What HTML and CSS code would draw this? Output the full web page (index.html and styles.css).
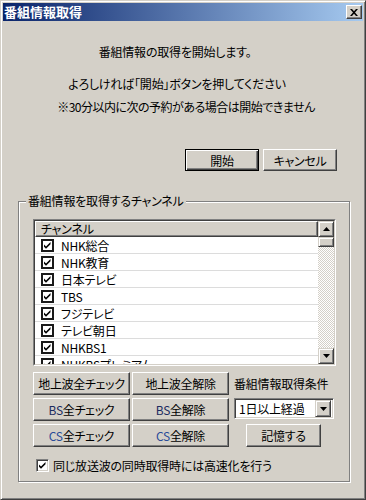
FILE: index.html
```html
<!DOCTYPE html>
<html lang="ja">
<head>
    <meta charset="UTF-8">
    <title>番組情報取得</title>
    <link rel="stylesheet" href="styles.css">
</head>
<body>
    <div class="window">
        <div class="titlebar">
            <span class="title">番組情報取得</span>
            <button class="close-btn">
                <svg width="8" height="7" viewBox="0 0 8 7"><path d="M0 0h2l2 2.2L6 0h2L5 3.5 8 7H6L4 4.8 2 7H0l3-3.5z" fill="#000"/></svg>
            </button>
        </div>

        <div class="message">
            <div class="msg-line msg-1">番組情報の取得を開始します。</div>
            <div class="msg-line msg-2">よろしければ「開始」ボタンを押してください</div>
            <div class="msg-line msg-3">※30分以内に次の予約がある場合は開始できません</div>
        </div>

        <div class="actions">
            <button class="btn btn-default">開始</button>
            <button class="btn">キャンセル</button>
        </div>

        <div class="group">
            <span class="legend">番組情報を取得するチャンネル</span>

            <div class="list">
                <div class="list-inner">
                    <div class="list-main">
                        <div class="list-header">チャンネル</div>
                        <div class="row"><span class="lv-check"></span><span class="row-text">NHK総合</span></div>
                        <div class="row"><span class="lv-check"></span><span class="row-text">NHK教育</span></div>
                        <div class="row"><span class="lv-check"></span><span class="row-text">日本テレビ</span></div>
                        <div class="row"><span class="lv-check"></span><span class="row-text">TBS</span></div>
                        <div class="row"><span class="lv-check"></span><span class="row-text">フジテレビ</span></div>
                        <div class="row"><span class="lv-check"></span><span class="row-text">テレビ朝日</span></div>
                        <div class="row"><span class="lv-check"></span><span class="row-text">NHKBS1</span></div>
                        <div class="row"><span class="lv-check"></span><span class="row-text">NHKBSプレミアム</span></div>
                    </div>
                    <div class="vscroll">
                        <div class="sb-btn">
                            <svg width="7" height="4" viewBox="0 0 7 4"><path d="M3.5 0L7 4H0z" fill="#000"/></svg>
                        </div>
                        <div class="sb-thumb"></div>
                        <div class="sb-track"></div>
                        <div class="sb-btn">
                            <svg width="7" height="4" viewBox="0 0 7 4"><path d="M0 0h7L3.5 4z" fill="#000"/></svg>
                        </div>
                    </div>
                </div>
            </div>

            <div class="controls">
                <button class="btn">地上波全チェック</button>
                <button class="btn">地上波全解除</button>
                <span class="cond-label">番組情報取得条件</span>

                <button class="btn"><span class="bs">BS</span>全チェック</button>
                <button class="btn"><span class="bs">BS</span>全解除</button>
                <div class="combo">
                    <span class="combo-text">1日以上経過</span>
                    <span class="combo-btn">
                        <svg width="7" height="4" viewBox="0 0 7 4"><path d="M0 0h7L3.5 4z" fill="#000"/></svg>
                    </span>
                </div>

                <button class="btn"><span class="cs">CS</span>全チェック</button>
                <button class="btn"><span class="cs">CS</span>全解除</button>
                <button class="btn btn-save">記憶する</button>
            </div>

            <label class="option">
                <span class="checkbox">
                    <svg width="9" height="9" viewBox="0 0 9 9"><path d="M1 3.5l2 2 4.5-4.5v2.2L3 7.7 1 5.7z" fill="#000"/></svg>
                </span>
                <span>同じ放送波の同時取得時には高速化を行う</span>
            </label>
        </div>
    </div>
</body>
</html>
```

FILE: styles.css
```css
* {
    box-sizing: border-box;
}

body {
    margin: 0;
    background: #d4d0c8;
    font-family: "Noto Sans CJK JP", sans-serif;
    font-size: 12px;
    font-feature-settings: "palt";
    letter-spacing: -0.2px;
    color: #000;
}

.window {
    width: 366px;
    height: 500px;
    background: #d4d0c8;
    border: 1px solid;
    border-color: #d4d0c8 #404040 #404040 #d4d0c8;
    box-shadow: inset 1px 1px 0 #fff, inset -1px -1px 0 #808080;
    padding: 2px;
}

.titlebar {
    height: 18px;
    display: flex;
    align-items: center;
    justify-content: space-between;
    padding: 0 1px 0 1px;
    background: linear-gradient(to right, #0a246a, #a6caf0);
}

.title {
    color: #fff;
    font-weight: bold;
    font-size: 13px;
    letter-spacing: 0;
    line-height: 18px;
}

.close-btn {
    width: 16px;
    height: 14px;
    padding: 0;
    display: flex;
    align-items: center;
    justify-content: center;
    background: #d4d0c8;
    border: 1px solid;
    border-color: #fff #404040 #404040 #fff;
    box-shadow: inset -1px -1px 0 #808080;
}

/* message text */
.message {
    margin-top: 24px;
}

.msg-line {
    line-height: 14px;
    text-align: center;
}

.msg-1 {
    padding-right: 16px;
}

.msg-2 {
    margin-top: 18px;
    padding-right: 12px;
}

.msg-3 {
    margin-top: 9px;
    padding-left: 6px;
    letter-spacing: -0.5px;
}

/* buttons */
.btn {
    height: 23px;
    padding: 0;
    font-family: inherit;
    font-size: 12px;
    font-feature-settings: "palt";
    letter-spacing: -0.3px;
    color: #000;
    background: #d4d0c8;
    border: 1px solid;
    border-color: #fff #404040 #404040 #fff;
    box-shadow: inset -1px -1px 0 #808080, inset 1px 1px 0 #d4d0c8;
}

.btn-default {
    border-color: #000;
    box-shadow: inset 1px 1px 0 #fff, inset -1px -1px 0 #404040, inset -2px -2px 0 #808080;
}

.actions {
    display: flex;
    justify-content: flex-end;
    gap: 4px;
    margin-top: 35px;
    padding-right: 26px;
}

.actions .btn {
    width: 74px;
    height: 22px;
}

/* group box */
.group {
    position: relative;
    margin: 30px 13px 0 15px;
    height: 281px;
    border: 1px solid #808080;
    box-shadow: inset 1px 1px 0 #fff, 1px 1px 0 #fff;
    padding: 17px 0 0 14px;
}

.legend {
    position: absolute;
    top: -8px;
    left: 7px;
    padding: 0 2px;
    line-height: 14px;
    background: #d4d0c8;
}

/* list view */
.list {
    width: 303px;
    height: 147px;
    border: 1px solid;
    border-color: #808080 #fff #fff #808080;
}

.list-inner {
    height: 100%;
    display: flex;
    border: 1px solid;
    border-color: #404040 #d4d0c8 #d4d0c8 #404040;
    background: #fff;
    overflow: hidden;
}

.list-main {
    flex: 1;
    overflow: hidden;
}

.list-header {
    height: 16px;
    line-height: 14px;
    padding-left: 5px;
    background: #d4d0c8;
    border: 1px solid;
    border-color: #fff #404040 #404040 #fff;
    box-shadow: inset -1px -1px 0 #808080;
}

.row {
    height: 17px;
    display: flex;
    align-items: center;
    border-bottom: 1px solid #dcdcdc;
}

.lv-check {
    width: 13px;
    height: 13px;
    margin-left: 6px;
    border: 2px solid #1a1a1a;
    background: #fff url("data:image/svg+xml,%3Csvg xmlns='http://www.w3.org/2000/svg' width='9' height='9'%3E%3Cpath d='M1 3.5l2 2 4.5-4.5v2.2L3 7.7 1 5.7z' fill='%23000'/%3E%3C/svg%3E") center / 9px 9px no-repeat;
}

.row-text {
    margin-left: 7px;
    white-space: nowrap;
}

.vscroll {
    width: 16px;
    display: flex;
    flex-direction: column;
}

.sb-btn,
.sb-thumb {
    background: #d4d0c8;
    border: 1px solid;
    border-color: #d4d0c8 #404040 #404040 #d4d0c8;
    box-shadow: inset 1px 1px 0 #fff, inset -1px -1px 0 #808080;
}

.sb-btn {
    height: 16px;
    display: flex;
    align-items: center;
    justify-content: center;
}

.sb-thumb {
    height: 10px;
}

.sb-track {
    flex: 1;
    background: repeating-conic-gradient(#d4d0c8 0 25%, #fff 0 50%) 0 0 / 2px 2px;
}

/* bottom controls */
.controls {
    display: grid;
    grid-template-columns: 97px 97px 1fr;
    grid-template-rows: 23px 23px 23px;
    column-gap: 2px;
    row-gap: 3px;
    margin-top: 6px;
}

.bs {
    color: #1c2c60;
}

.cs {
    color: #2a4c98;
}

.cond-label {
    margin-left: 3px;
    line-height: 23px;
    white-space: nowrap;
}

.combo {
    width: 100px;
    height: 21px;
    margin-left: 3px;
    display: flex;
    align-items: center;
    justify-content: space-between;
    background: #fff;
    border: 1px solid;
    border-color: #808080 #fff #fff #808080;
    box-shadow: inset 1px 1px 0 #404040, inset -1px -1px 0 #d4d0c8;
    padding: 2px;
}

.combo-text {
    padding-left: 2px;
    white-space: nowrap;
}

.combo-btn {
    width: 16px;
    height: 17px;
    display: flex;
    align-items: center;
    justify-content: center;
    background: #d4d0c8;
    border: 1px solid;
    border-color: #d4d0c8 #404040 #404040 #d4d0c8;
    box-shadow: inset 1px 1px 0 #fff, inset -1px -1px 0 #808080;
}

.btn-save {
    width: 75px;
    margin-left: 15px;
}

.option {
    display: flex;
    align-items: center;
    height: 16px;
    margin-top: 10px;
}

.checkbox {
    width: 13px;
    height: 13px;
    margin-left: 3px;
    margin-right: 4px;
    display: flex;
    align-items: center;
    justify-content: center;
    background: #fff;
    border: 1px solid;
    border-color: #808080 #fff #fff #808080;
    box-shadow: inset 1px 1px 0 #404040, inset -1px -1px 0 #d4d0c8;
}
```
